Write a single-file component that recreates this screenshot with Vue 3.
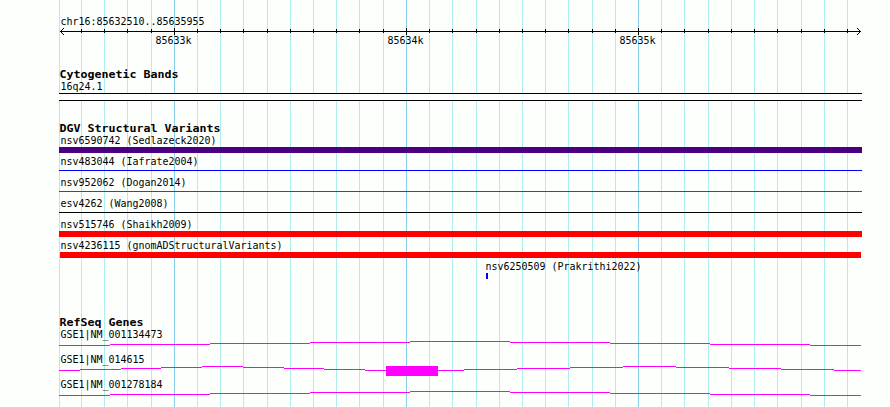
<template>
  <svg class="browser" width="890" height="407" viewBox="0 0 890 407" shape-rendering="crispEdges">
    <!-- background grid -->
    <rect
      v-for="line in gridLines"
      :key="line.x"
      :x="line.x"
      y="0"
      width="1"
      height="407"
      :class="line.major ? 'grid-major' : 'grid-minor'"
    />

    <!-- ruler -->
    <g class="ruler">
      <rect x="60" y="31" width="801" height="1" />
      <rect
        v-for="line in gridLines.slice(1)"
        :key="line.x"
        :x="line.x"
        :y="line.major ? 28 : 29"
        width="1"
        :height="line.major ? 7 : 4"
      />
      <path d="M60 31h1v1h-1zM61 30h1v3h-1zM62 29h1v1h-1zM62 33h1v1h-1zM63 28h1v1h-1zM63 34h1v1h-1z" />
      <path d="M860 31h1v1h-1zM859 30h1v3h-1zM858 29h1v1h-1zM858 33h1v1h-1zM857 28h1v1h-1zM857 34h1v1h-1z" />
    </g>

    <!-- cytogenetic band -->
    <rect class="band" x="59" y="93" width="803" height="1" />
    <rect class="band" x="59" y="100" width="803" height="1" />
    <rect class="band-fill" x="59" y="94" width="803" height="6" />

    <!-- structural variants -->
    <rect
      v-for="bar in variants"
      :key="bar.y"
      :x="bar.x"
      :y="bar.y"
      :width="bar.width"
      :height="bar.height"
      :fill="bar.color"
    />

    <!-- genes -->
    <g class="gene">
      <template v-for="gene in genes" :key="gene.y">
        <rect
          v-for="s in segments(gene)"
          :key="s.x"
          :x="s.x"
          :y="s.y"
          :width="s.width"
          height="1"
        />
      </template>
      <rect x="386" y="366" width="52" height="10" />
    </g>

    <text
      v-for="label in labels"
      :key="label.text"
      :x="label.x"
      :y="label.y"
      :textLength="label.text.length * (label.bold ? 7 : 6)"
      lengthAdjust="spacingAndGlyphs"
      :class="{ heading: label.bold }"
    >{{ label.text }}</text>
  </svg>
</template>

<script setup>
const gridLines = [{ x: 59, major: false }]
for (let i = -4; i <= 29; i++) {
  gridLines.push({ x: Math.floor(174.25 + 23.215 * i), major: i % 10 === 0 })
}

const variants = [
  { x: 59, y: 147, width: 803, height: 6, color: '#4b0082' },
  { x: 59, y: 170, width: 803, height: 1, color: '#0000ff' },
  { x: 59, y: 191, width: 803, height: 1, color: '#ff0000' },
  { x: 59, y: 212, width: 803, height: 1, color: '#000000' },
  { x: 59, y: 231, width: 803, height: 6, color: '#ff0000' },
  { x: 60, y: 252, width: 801, height: 6, color: '#ff0000' },
  { x: 486, y: 273, width: 2, height: 6, color: '#0000ff' }
]

// each step is [x where it starts, rise above the baseline]
const longIntron = [[59, 0], [110, 1], [210, 2], [310, 3], [410, 4], [510, 3], [610, 2], [710, 1], [810, 0]]
const splitIntron = [
  [59, 0], [80, 1], [121, 2], [161, 3], [202, 4], [243, 3], [284, 2], [324, 1], [365, 0],
  [464, 1], [517, 2], [570, 3], [623, 4], [676, 3], [729, 2], [781, 1], [834, 0]
]
const genes = [
  { y: 345, steps: longIntron },
  { y: 370, steps: splitIntron },
  { y: 395, steps: longIntron }
]

const segments = ({ y, steps }) =>
  steps.map(([x, rise], i) => ({
    x,
    y: y - rise,
    width: (i + 1 < steps.length ? steps[i + 1][0] : 861) - x
  }))

const labels = [
  { x: 60.5, y: 25, text: 'chr16:85632510..85635955' },
  { x: 155.5, y: 44, text: '85633k' },
  { x: 387.5, y: 44, text: '85634k' },
  { x: 619.5, y: 44, text: '85635k' },
  { x: 59.5, y: 78, text: 'Cytogenetic Bands', bold: true },
  { x: 60.5, y: 90, text: '16q24.1' },
  { x: 59.5, y: 132, text: 'DGV Structural Variants', bold: true },
  { x: 60.5, y: 144, text: 'nsv6590742 (Sedlazeck2020)' },
  { x: 60.5, y: 165, text: 'nsv483044 (Iafrate2004)' },
  { x: 60.5, y: 186, text: 'nsv952062 (Dogan2014)' },
  { x: 60.5, y: 207, text: 'esv4262 (Wang2008)' },
  { x: 60.5, y: 228, text: 'nsv515746 (Shaikh2009)' },
  { x: 60.5, y: 249, text: 'nsv4236115 (gnomADStructuralVariants)' },
  { x: 485.5, y: 270, text: 'nsv6250509 (Prakrithi2022)' },
  { x: 59.5, y: 326, text: 'RefSeq Genes', bold: true },
  { x: 60.5, y: 338, text: 'GSE1|NM_001134473' },
  { x: 60.5, y: 363, text: 'GSE1|NM_014615' },
  { x: 60.5, y: 388, text: 'GSE1|NM_001278184' }
]
</script>

<style>
body {
  margin: 0;
  background: #fdfffd;
}
</style>

<style scoped>
.browser {
  display: block;
  background: #fdfffd;
}
.grid-minor { fill: #afeeee; }
.grid-major { fill: #87ceeb; }
.ruler, .band { fill: #000; }
.band-fill { fill: #fff; }
.gene { fill: #ff00ff; }
text {
  font-family: 'DejaVu Sans Mono', monospace;
  font-size: 11px;
  fill: #000;
  white-space: pre;
}
.heading {
  font-size: 11.3px;
  font-weight: bold;
}
</style>
